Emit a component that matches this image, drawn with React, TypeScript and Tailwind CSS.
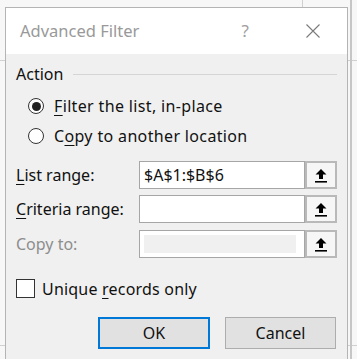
import type { ReactNode } from 'react';

const FONT = { fontFamily: '"Noto Sans", "Open Sans", sans-serif' };

function U({ children }: { children: ReactNode }) {
  return <span className="underline underline-offset-[3px] decoration-1">{children}</span>;
}

function PickIcon() {
  return (
    <svg width="12" height="15" viewBox="0 0 12 15" className="block">
      <path d="M6 1 L11.5 6.5 L8 6.5 L8 11 L4 11 L4 6.5 L0.5 6.5 Z" fill="#000" />
      <rect x="0" y="13" width="12" height="1.6" fill="#000" />
    </svg>
  );
}

function RangeRow({ label, value, disabled }: { label: ReactNode; value?: string; disabled?: boolean }) {
  return (
    <div className="flex items-center h-[28px]">
      <div className={`w-[123px] text-[16px] leading-[20px] ${disabled ? 'text-[#8d8d8d]' : 'text-[#111]'}`}>{label}</div>
      <div className="w-[166px] h-[28px] border border-[#a6a6a6] bg-white flex items-center pl-[4px] text-[16px] leading-[20px] text-[#111]">
        {disabled ? <div className="w-full h-full py-[4px] pr-[8px]"><div className="w-full h-full bg-[#f0f0f0]" /></div> : value}
      </div>
      <div className="w-[32px] h-[28px] border-2 border-[#b9b9b9] bg-[#f6f6f6] flex items-center justify-center">
        <PickIcon />
      </div>
    </div>
  );
}

function Radio({ checked, children }: { checked?: boolean; children: ReactNode }) {
  return (
    <div className="flex items-center h-[20px] pl-[12px]">
      <div className="w-[16px] h-[16px] rounded-full border-[1.5px] border-[#333] bg-white flex items-center justify-center">
        {checked && <div className="w-[9px] h-[9px] rounded-full bg-[#222]" />}
      </div>
      <span className="ml-[10px] text-[16px] leading-[20px] tracking-[0.35px] text-[#111]">{children}</span>
    </div>
  );
}

export default function App() {
  return (
    <div className="relative w-[357px] h-[359px] overflow-hidden bg-[#f7f7f7]" style={FONT}>
      {/* sheet gridlines behind the dialog */}
      <div className="absolute left-0 right-0 top-[60px] h-px bg-[#d0d0d0]" />
      <div className="absolute left-0 right-0 top-[345px] h-px bg-[#d0d0d0]" />
      <div className="absolute top-0 bottom-0 left-[302px] w-px bg-[#d0d0d0]" />
      <div className="absolute top-0 bottom-0 left-[350px] w-[2px] bg-[#c6c6c6]" />

      <div className="relative ml-[5px] mt-[7px] w-[343px] h-[360px] border border-[#b4b4b4] bg-[#f0f0f0]">
        {/* title bar */}
        <div className="h-[46px] bg-white flex items-center pl-[14px] pr-[27px]">
          <span className="text-[16.5px] text-[#999999] mt-[1px]">Advanced Filter</span>
          <span className="ml-auto text-[17px] text-[#a0a0a0] mr-[57px]">?</span>
          <svg width="14" height="14" viewBox="0 0 14 14">
            <path d="M0.5 0.5 L13.5 13.5 M13.5 0.5 L0.5 13.5" stroke="#7a7a7a" strokeWidth="1.1" />
          </svg>
        </div>

        {/* body */}
        <div className="pl-[10px] pr-[10px] flex flex-col">
          <div className="mt-[10px] flex items-center h-[20px]">
            <span className="text-[16px] leading-[20px] text-[#111]">Action</span>
            <div className="ml-[10px] flex-1 h-px bg-[#d5d5d5]" />
          </div>

          <div className="mt-[12px]">
            <Radio checked>
              <U>F</U>ilter the list, in-place
            </Radio>
          </div>
          <div className="mt-[10px]">
            <Radio>
              C<U>o</U>py to another location
            </Radio>
          </div>

          <div className="mt-[15px]">
            <RangeRow label={<><U>L</U>ist range:</>} value="$A$1:$B$6" />
          </div>
          <div className="mt-[6px]">
            <RangeRow label={<><U>C</U>riteria range:</>} value="" />
          </div>
          <div className="mt-[7px]">
            <RangeRow label="Copy to:" disabled />
          </div>

          <div className="mt-[21px] flex items-center h-[19px]">
            <div className="w-[19px] h-[19px] border border-[#333] bg-white" />
            <span className="ml-[7px] text-[16px] leading-[20px] tracking-[0.2px] text-[#111]">
              Unique <U>r</U>ecords only
            </span>
          </div>

          <div className="mt-[19px] flex justify-end gap-[15px] pr-[1px]">
            <button type="button" className="w-[112px] h-[32px] border-2 border-[#0078d7] bg-[#e1e1e1] text-[16px] text-[#111]">
              OK
            </button>
            <button type="button" className="w-[111px] h-[32px] border border-[#adadad] bg-[#e1e1e1] text-[16px] text-[#111]">
              Cancel
            </button>
          </div>
        </div>
      </div>
    </div>
  );
}
